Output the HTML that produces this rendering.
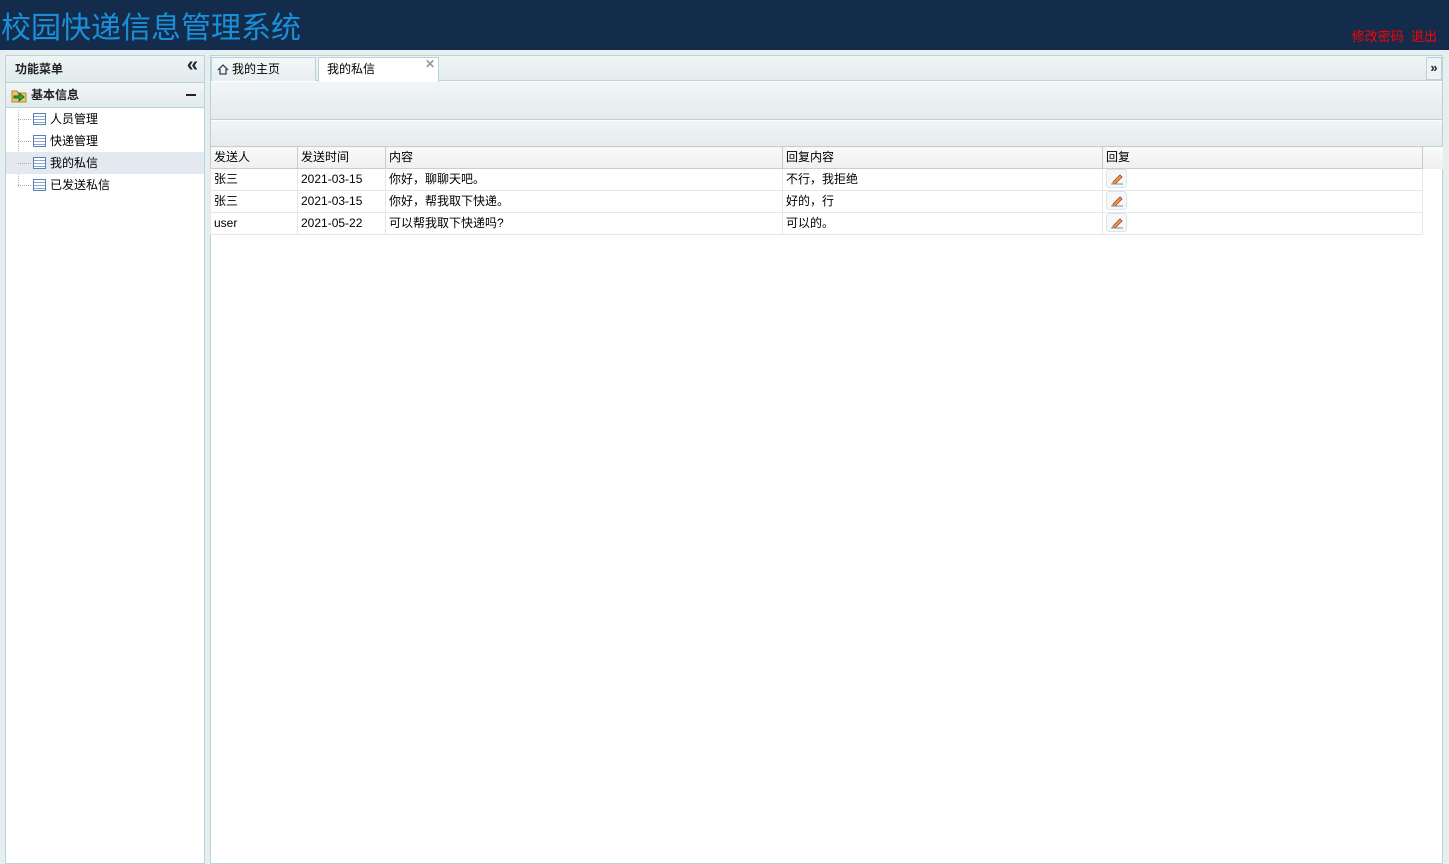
<!DOCTYPE html>
<html><head><meta charset="utf-8"><style>
*{margin:0;padding:0;box-sizing:border-box}
body{width:1449px;height:864px;overflow:hidden;background:#e6eef0;font-family:"Liberation Sans","Noto Sans CJK SC",sans-serif;font-size:12px;color:#000;position:relative}
.top{position:absolute;left:0;top:0;width:1449px;height:50px;background:#132c4c}
.title{position:absolute;left:1px;top:3px;font-size:30px;color:#1a8fd8}
.links{position:absolute;right:12px;top:26px;color:#f00;font-size:13px}
.left{position:absolute;left:5px;top:55px;width:200px;height:809px;background:#fff;border:1px solid #b9d3d6}
.lh{height:27px;background:linear-gradient(#eff4f5,#e0eaec);border-bottom:1px solid #b9d3d6;padding:4px 0 0 9px;font-weight:bold;color:#222;position:relative}
.lh2{height:25px;background:linear-gradient(#f2f6f7,#e1eaec);border-bottom:1px solid #b9d3d6;padding:3px 0 0 25px;font-weight:bold;color:#222;position:relative}
.it{height:22px;line-height:22px;padding-left:44px;position:relative}
.it.sel{background:#e3e8f1}
.ico{position:absolute;left:27px;top:5px;width:13px;height:12px;border:1px solid #5b7fb6;background:repeating-linear-gradient(#fff 0 2px,#8aa6d3 2px 3px)}
.dot{position:absolute;left:12px;top:11px;width:13px;border-top:1px dotted #aaa}
.right{position:absolute;left:210px;top:55px;width:1233px;height:809px;background:#fff;border:1px solid #b9d3d6}
.tabs{height:25px;background:linear-gradient(#f0f4f5,#e3ecee);border-bottom:1px solid #b9d3d6;position:relative}
.tab{position:absolute;top:1px;height:24px;border:1px solid #b9d3d6;border-bottom:none;background:linear-gradient(#f4f7f8,#e6eef0);padding:2px 0 0 20px}
.bar1{height:38px;background:linear-gradient(#f1f5f6,#e4ecee);border-bottom:1px solid #b9d3d6;margin-top:1px}
.bar2{height:26px;background:linear-gradient(#f1f5f6,#e4ecee);border-bottom:1px solid #b9d3d6;margin-top:1px}
table{border-collapse:collapse;position:absolute;left:-1px;top:90px;width:1213px}
td{height:22px;border:1px solid #e6e6e6;padding:0 3px 2px;white-space:nowrap}
tr.h td{background:linear-gradient(#fafafa,#efefef);border-color:#ccc}
.hfill{position:absolute;left:1212px;top:91px;width:20px;height:22px;background:linear-gradient(#fafafa,#efefef)}
.btn{display:inline-block;width:21px;height:19px;border:1px solid #dde4e6;border-radius:3px;background:#f5f8f9;position:relative;vertical-align:middle}
</style></head><body>
<div class="top"><div class="title">校园快递信息管理系统</div><div class="links">修改密码&nbsp;&nbsp;退出</div></div>
<div class="left">
 <div class="lh">功能菜单<span style="position:absolute;right:6px;top:-2px;font-size:20px;color:#223">«</span></div>
 <div class="lh2"><svg style="position:absolute;left:5px;top:5px" width="16" height="15"><path d="M1 3h5l1 2h8v9H1z" fill="#e8c86a" stroke="#b08a2a"/><path d="M3 8h5V5l5 4-5 4v-3H3z" fill="#3a3" stroke="#262"/></svg>基本信息<span style="position:absolute;right:8px;top:11px;width:10px;height:2px;background:#222"></span></div>
 <div style="position:absolute;left:12px;top:54px;height:77px;border-left:1px dotted #bbb"></div>
 <div class="it"><span class="dot"></span><span class="ico"></span>人员管理</div>
 <div class="it"><span class="dot"></span><span class="ico"></span>快递管理</div>
 <div class="it sel"><span class="dot"></span><span class="ico"></span>我的私信</div>
 <div class="it"><span class="dot"></span><span class="ico"></span>已发送私信</div>
</div>
<div class="right">
 <div class="tabs">
  <div class="tab" style="left:0;width:105px"><svg style="position:absolute;left:5px;top:6px" width="12" height="11"><path d="M1 6L6 1l5 5M3 5v5h6V5" fill="none" stroke="#345" stroke-width="1.3"/></svg>我的主页</div>
  <div class="tab" style="left:107px;width:121px;background:#fff;padding-left:8px;height:25px">我的私信<span style="position:absolute;right:3px;top:-1px;color:#999;font-size:12px;font-weight:bold">✕</span></div>
  <div style="position:absolute;right:0;top:1px;width:16px;height:23px;border:1px solid #b9d3d6;background:#eef3f4;text-align:center;font-weight:bold;line-height:20px;color:#223;font-size:13px">»</div>
 </div>
 <div class="bar1"></div>
 <div class="bar2"></div>
 <div class="hfill"></div>
 <table>
  <tr class="h"><td style="width:87px">发送人</td><td style="width:88px">发送时间</td><td style="width:397px">内容</td><td style="width:320px">回复内容</td><td>回复</td></tr>
  <tr><td>张三</td><td>2021-03-15</td><td>你好，聊聊天吧。</td><td>不行，我拒绝</td><td><span class="btn"><svg width="19" height="17"><path d="M6 12l7-7 2 2-7 7H6z" fill="#e9a23b" stroke="#a33" stroke-width=".8"/><path d="M4 14h12" stroke="#888"/></svg></span></td></tr>
  <tr><td>张三</td><td>2021-03-15</td><td>你好，帮我取下快递。</td><td>好的，行</td><td><span class="btn"><svg width="19" height="17"><path d="M6 12l7-7 2 2-7 7H6z" fill="#e9a23b" stroke="#a33" stroke-width=".8"/><path d="M4 14h12" stroke="#888"/></svg></span></td></tr>
  <tr><td>user</td><td>2021-05-22</td><td>可以帮我取下快递吗?</td><td>可以的。</td><td><span class="btn"><svg width="19" height="17"><path d="M6 12l7-7 2 2-7 7H6z" fill="#e9a23b" stroke="#a33" stroke-width=".8"/><path d="M4 14h12" stroke="#888"/></svg></span></td></tr>
 </table>
</div>
</body></html>
